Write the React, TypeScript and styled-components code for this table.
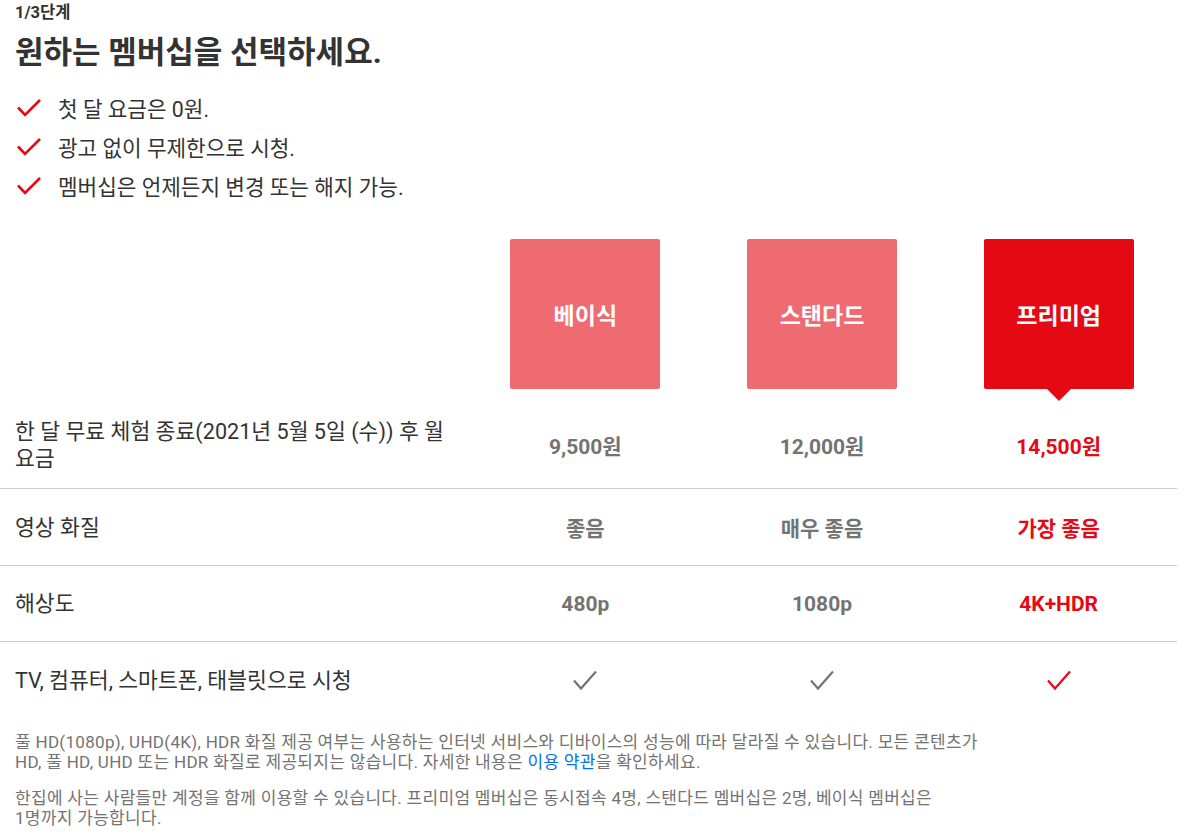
import styled, { createGlobalStyle } from "styled-components";

const GlobalStyle = createGlobalStyle`
  body {
    margin: 0;
    background: #fff;
    color: #333;
    font-family: Roboto, "Noto Sans CJK KR", sans-serif;
  }
`;

interface PlanProps {
  best?: boolean;
}

const plans = [
  { name: "베이식", price: "9,500원", quality: "좋음", resolution: "480p" },
  { name: "스탠다드", price: "12,000원", quality: "매우 좋음", resolution: "1080p" },
  { name: "프리미엄", price: "14,500원", quality: "가장 좋음", resolution: "4K+HDR" },
];

const perks = [
  "첫 달 요금은 0원.",
  "광고 없이 무제한으로 시청.",
  "멤버십은 언제든지 변경 또는 해지 가능.",
];

function PerkCheck() {
  return (
    <svg width="24" height="18" viewBox="0 0 24 18">
      <polyline points="1,8.5 8,16 23,1" fill="none" stroke="#e50914" strokeWidth="2.6" />
    </svg>
  );
}

function RowCheck({ best }: PlanProps) {
  return (
    <svg width="24" height="21" viewBox="0 0 24 21">
      <polyline
        points="1,10.5 8,18.5 23,1.5"
        fill="none"
        stroke={best ? "#e50914" : "#737373"}
        strokeWidth="2.2"
      />
    </svg>
  );
}

export default function App() {
  return (
    <Page>
      <GlobalStyle />
      <Intro>
        <Step>1/3단계</Step>
        <Title>원하는 멤버십을 선택하세요.</Title>
        <PerkList>
          {perks.map((p) => (
            <Perk key={p}>
              <PerkCheck />
              <span>{p}</span>
            </Perk>
          ))}
        </PerkList>
      </Intro>

      <PlanHeader>
        <div />
        {plans.map((p, i) => (
          <PlanCell key={p.name}>
            <PlanBox best={i === 2}>{p.name}</PlanBox>
          </PlanCell>
        ))}
      </PlanHeader>

      <Row height={87}>
        <Label>한 달 무료 체험 종료(2021년 5월 5일 (수)) 후 월 요금</Label>
        {plans.map((p, i) => (
          <Value key={p.name} best={i === 2}>
            {p.price}
          </Value>
        ))}
      </Row>
      <Row height={76}>
        <Label>영상 화질</Label>
        {plans.map((p, i) => (
          <Value key={p.name} best={i === 2}>
            {p.quality}
          </Value>
        ))}
      </Row>
      <Row height={75}>
        <Label>해상도</Label>
        {plans.map((p, i) => (
          <Value key={p.name} best={i === 2}>
            {p.resolution}
          </Value>
        ))}
      </Row>
      <Row height={76} last>
        <Label>TV, 컴퓨터, 스마트폰, 태블릿으로 시청</Label>
        {plans.map((p, i) => (
          <Value key={p.name} best={i === 2}>
            <RowCheck best={i === 2} />
          </Value>
        ))}
      </Row>

      <Footer>
        <Note>
          풀 HD(1080p), UHD(4K), HDR 화질 제공 여부는 사용하는 인터넷 서비스와 디바이스의 성능에 따라
          달라질 수 있습니다. 모든 콘텐츠가 HD, 풀 HD, UHD 또는 HDR 화질로 제공되지는 않습니다. 자세한
          내용은 <Link>이용 약관</Link>을 확인하세요.
        </Note>
        <Note>
          한집에 사는 사람들만 계정을 함께 이용할 수 있습니다. 프리미엄 멤버십은 동시접속 4명, 스탠다드
          멤버십은 2명, 베이식 멤버십은 1명까지 가능합니다.
        </Note>
      </Footer>
    </Page>
  );
}

const Page = styled.div`
  width: 1177px;
  word-break: keep-all;
`;

const Intro = styled.div`
  padding-left: 15px;
`;

const Step = styled.div`
  margin-top: 3px;
  font-size: 16.5px;
  font-weight: 700;
  line-height: 20px;
`;

const Title = styled.h1`
  margin: 12px 0 0;
  font-size: 31px;
  font-weight: 700;
  line-height: 36px;
`;

const PerkList = styled.ul`
  list-style: none;
  margin: 17px 0 0;
  padding: 0;
`;

const Perk = styled.li`
  display: flex;
  align-items: center;
  height: 39px;
  font-size: 21.3px;
  gap: 17px;

  svg {
    margin-left: 2px;
    flex: none;
  }
`;

const Grid = styled.div`
  display: grid;
  grid-template-columns: 467px repeat(3, 1fr);
`;

const PlanHeader = styled(Grid)`
  padding-top: 34px;
`;

const PlanCell = styled.div`
  display: flex;
  justify-content: center;
  padding-bottom: 12px;
`;

const PlanBox = styled.div<PlanProps>`
  position: relative;
  width: 150px;
  height: 150px;
  border-radius: 2px;
  background: ${(p) => (p.best ? "#e50914" : "#ef6b72")};
  color: #fff;
  font-size: 23px;
  font-weight: 700;
  display: flex;
  align-items: center;
  justify-content: center;

  &::after {
    content: "";
    display: ${(p) => (p.best ? "block" : "none")};
    position: absolute;
    top: 100%;
    left: 50%;
    margin-left: -12px;
    border-style: solid;
    border-width: 12px 12px 0;
    border-color: #e50914 transparent transparent;
  }
`;

const Row = styled(Grid)<{ height: number; last?: boolean }>`
  height: ${(p) => p.height}px;
  align-items: center;
  border-bottom: ${(p) => (p.last ? "none" : "1px solid #cccccc")};
`;

const Label = styled.div`
  padding-left: 15px;
  font-size: 21.6px;
  line-height: 27px;
  color: #333;
`;

const Value = styled.div<PlanProps>`
  display: flex;
  justify-content: center;
  font-size: 21px;
  font-weight: 700;
  color: ${(p) => (p.best ? "#e50914" : "#737373")};
`;

const Footer = styled.div`
  padding: 14px 0 0 15px;
  width: 968px;
`;

const Note = styled.p`
  margin: 0 0 16px;
  font-size: 17px;
  letter-spacing: 0.3px;
  line-height: 20px;
  color: #737373;
`;

const Link = styled.span`
  color: #0071eb;
`;
